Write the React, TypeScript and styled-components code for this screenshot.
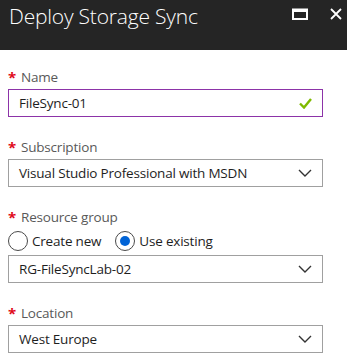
import React, { useState } from 'react';
import styled, { createGlobalStyle } from 'styled-components';

const GlobalStyle = createGlobalStyle`
  html, body {
    margin: 0;
    padding: 0;
    background: #ffffff;
  }
  body {
    font-family: 'Open Sans', 'Noto Sans', sans-serif;
  }
`;

const fields = {
  subscription: 'Visual Studio Professional with MSDN',
  resourceGroup: 'RG-FileSyncLab-02',
  location: 'West Europe',
};

const Chevron = () => (
  <svg width="14" height="8" viewBox="0 0 14 8" fill="none">
    <path d="M1 1l6 6 6-6" stroke="#333" strokeWidth="1.4" />
  </svg>
);

const Check = () => (
  <svg width="13" height="11" viewBox="0 0 13 11" fill="none">
    <path d="M1 5.5l4 4 7-8.5" stroke="#7fba00" strokeWidth="2.4" />
  </svg>
);

const MaximizeIcon = () => (
  <svg width="16" height="12" viewBox="0 0 16 12" fill="none">
    <rect x="1" y="1.5" width="14" height="9.5" stroke="#fff" strokeWidth="2" />
    <rect x="1" y="1" width="14" height="3" fill="#fff" />
  </svg>
);

const CloseIcon = () => (
  <svg width="12" height="12" viewBox="0 0 12 12" fill="none">
    <path d="M1 1l10 10M11 1L1 11" stroke="#fff" strokeWidth="1.8" />
  </svg>
);

const App = () => {
  const [mode, setMode] = useState<'new' | 'existing'>('existing');

  return (
    <>
      <GlobalStyle />
      <StyledBlade>
        <StyledHeader>
          <StyledTitle>Deploy Storage Sync</StyledTitle>
          <StyledHeaderActions>
            <StyledIconButton aria-label="maximize">
              <MaximizeIcon />
            </StyledIconButton>
            <StyledIconButton aria-label="close">
              <CloseIcon />
            </StyledIconButton>
          </StyledHeaderActions>
        </StyledHeader>

        <StyledForm>
          <StyledField>
            <StyledLabel>
              <StyledStar>*</StyledStar>Name
            </StyledLabel>
            <StyledBox $focused>
              <span>FileSync-01</span>
              <Check />
            </StyledBox>
          </StyledField>

          <StyledField>
            <StyledLabel>
              <StyledStar>*</StyledStar>Subscription
            </StyledLabel>
            <StyledBox>
              <span>{fields.subscription}</span>
              <Chevron />
            </StyledBox>
          </StyledField>

          <StyledField>
            <StyledLabel>
              <StyledStar>*</StyledStar>Resource group
            </StyledLabel>
            <StyledRadios>
              <StyledRadio onClick={() => setMode('new')}>
                <StyledCircle $checked={mode === 'new'} />
                Create new
              </StyledRadio>
              <StyledRadio onClick={() => setMode('existing')}>
                <StyledCircle $checked={mode === 'existing'} />
                Use existing
              </StyledRadio>
            </StyledRadios>
            <StyledBox>
              <span>{fields.resourceGroup}</span>
              <Chevron />
            </StyledBox>
          </StyledField>

          <StyledField>
            <StyledLabel>
              <StyledStar>*</StyledStar>Location
            </StyledLabel>
            <StyledBox>
              <span>{fields.location}</span>
              <Chevron />
            </StyledBox>
          </StyledField>
        </StyledForm>
      </StyledBlade>
    </>
  );
};

export default App;

const StyledBlade = styled.div`
  width: 347px;
  height: 358px;
  overflow: hidden;
  background: #fff;
`;

const StyledHeader = styled.div`
  display: flex;
  align-items: flex-start;
  justify-content: space-between;
  height: 50px;
  padding: 1px 5px 0 9px;
  box-sizing: border-box;
  background: #252525;
`;

const StyledTitle = styled.h1`
  margin: 0;
  color: #fff;
  font-family: 'Open Sans', 'Noto Sans', sans-serif;
  font-size: 21px;
  font-weight: 300;
  line-height: 30px;
  letter-spacing: -0.2px;
`;

const StyledHeaderActions = styled.div`
  display: flex;
  align-items: center;
  gap: 22px;
  padding-top: 7px;
`;

const StyledIconButton = styled.button`
  display: flex;
  padding: 0;
  border: 0;
  background: none;
`;

const StyledForm = styled.div`
  display: flex;
  flex-direction: column;
  gap: 20px;
  padding: 17px 24px 0 8px;
`;

const StyledField = styled.div`
  display: flex;
  flex-direction: column;
`;

const StyledLabel = styled.div`
  display: flex;
  align-items: center;
  height: 20px;
  margin-bottom: 2px;
  color: #595959;
  font-size: 13.5px;
  letter-spacing: -0.2px;
  line-height: 20px;
`;

const StyledStar = styled.span`
  width: 13px;
  height: 20px;
  color: #e00b1c;
  font-size: 15px;
  font-weight: 700;
  line-height: 20px;
`;

const StyledBox = styled.div<{ $focused?: boolean }>`
  display: flex;
  align-items: center;
  justify-content: space-between;
  height: 28px;
  padding: 0 10px 0 10px;
  box-sizing: border-box;
  border: 1px solid ${(p) => (p.$focused ? '#8c33a8' : '#a0a0a0')};
  color: #1e1e1e;
  font-size: 13.5px;
  letter-spacing: -0.2px;
`;

const StyledRadios = styled.div`
  display: flex;
  align-items: center;
  gap: 14px;
  height: 24px;
  margin-bottom: 2px;
`;

const StyledRadio = styled.label`
  display: flex;
  align-items: center;
  gap: 4px;
  color: #1e1e1e;
  font-size: 13.5px;
  letter-spacing: -0.2px;
  line-height: 20px;
  cursor: pointer;
`;

const StyledCircle = styled.span<{ $checked: boolean }>`
  position: relative;
  width: 20px;
  height: 20px;
  box-sizing: border-box;
  border: 1px solid #4a4a4a;
  border-radius: 50%;

  &::after {
    content: '';
    display: ${(p) => (p.$checked ? 'block' : 'none')};
    position: absolute;
    top: 4px;
    left: 4px;
    width: 10px;
    height: 10px;
    border-radius: 50%;
    background: #0063d6;
  }
`;
